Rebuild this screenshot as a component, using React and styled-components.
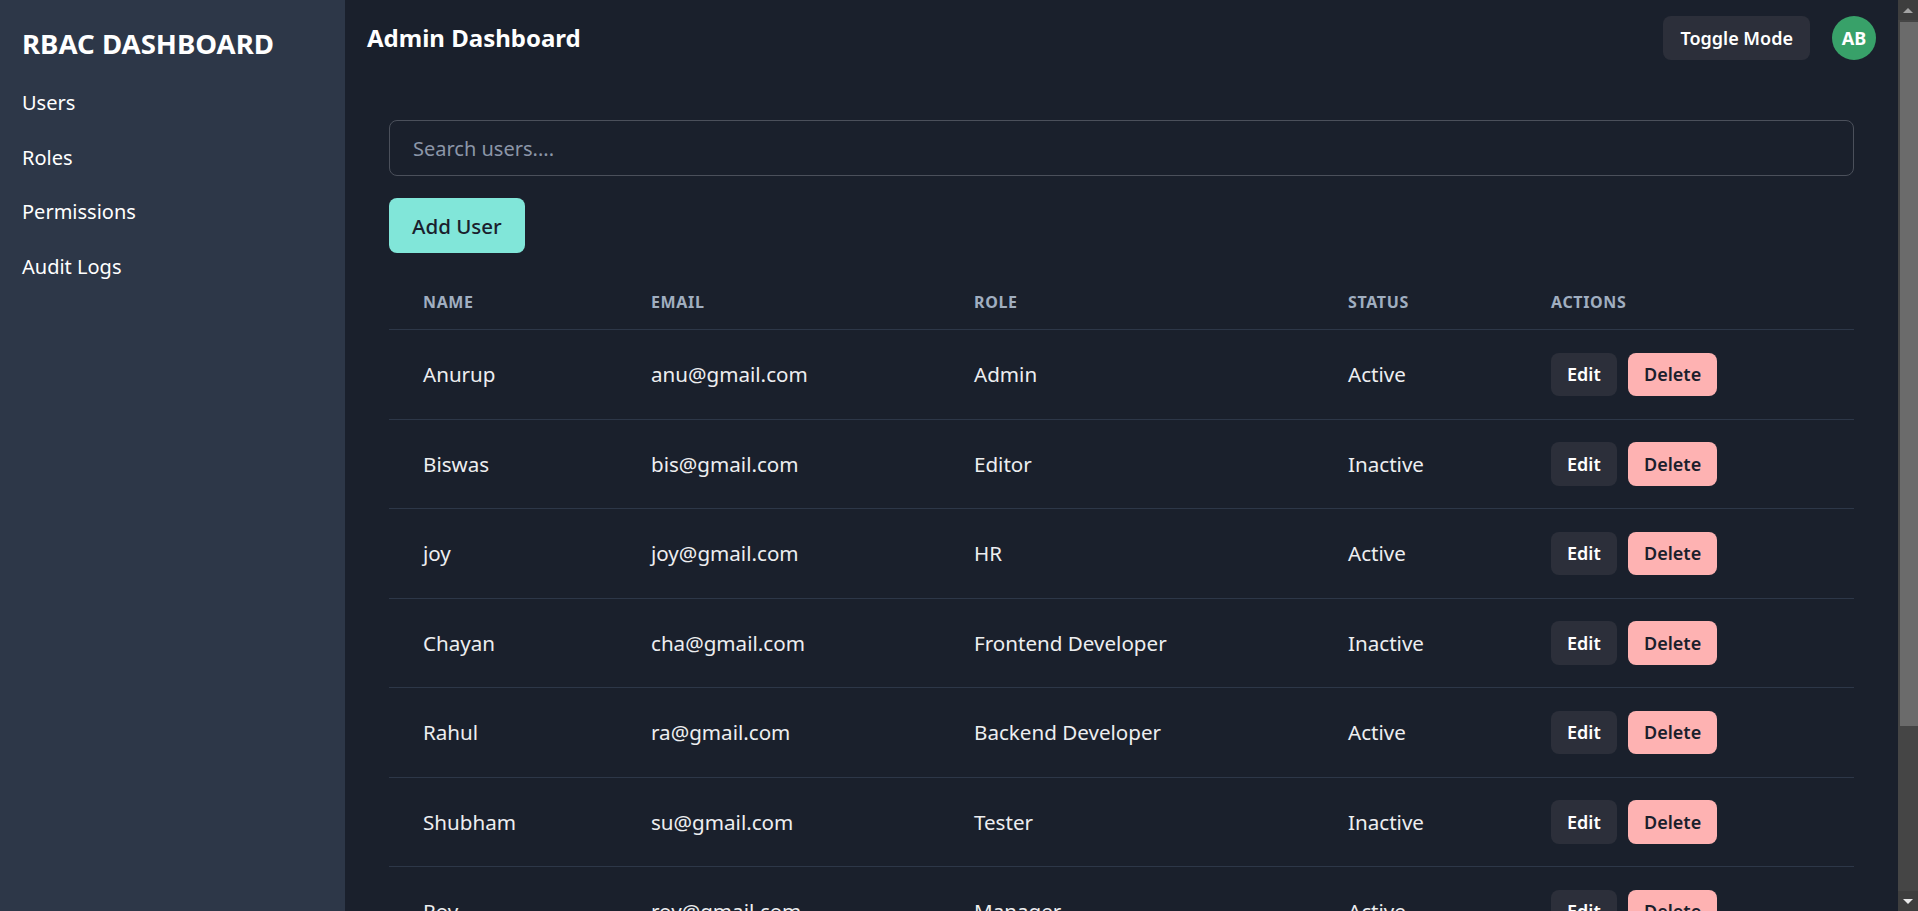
import React from 'react';
import styled, { createGlobalStyle } from 'styled-components';

const GlobalStyle = createGlobalStyle`
  html, body {
    margin: 0;
    padding: 0;
    background: #1a202c;
    font-family: "Noto Sans", "Open Sans", sans-serif;
    color: #edeef0;
  }
  * { box-sizing: border-box; }
`;

const users = [
  { name: 'Anurup', email: 'anu@gmail.com', role: 'Admin', status: 'Active' },
  { name: 'Biswas', email: 'bis@gmail.com', role: 'Editor', status: 'Inactive' },
  { name: 'joy', email: 'joy@gmail.com', role: 'HR', status: 'Active' },
  { name: 'Chayan', email: 'cha@gmail.com', role: 'Frontend Developer', status: 'Inactive' },
  { name: 'Rahul', email: 'ra@gmail.com', role: 'Backend Developer', status: 'Active' },
  { name: 'Shubham', email: 'su@gmail.com', role: 'Tester', status: 'Inactive' },
  { name: 'Roy', email: 'roy@gmail.com', role: 'Manager', status: 'Active' },
  { name: 'Amit', email: 'ami@gmail.com', role: 'Viewer', status: 'Active' },
];

const columns = [
  { label: 'Name', width: 228 },
  { label: 'Email', width: 323 },
  { label: 'Role', width: 374 },
  { label: 'Status', width: 203 },
  { label: 'Actions', width: 337 },
];

const App = () => {
  return (
    <>
      <GlobalStyle />
      <Layout>
        <Sidebar>
          <Brand>RBAC DASHBOARD</Brand>
          <NavList>
            <NavLink>Users</NavLink>
            <NavLink>Roles</NavLink>
            <NavLink>Permissions</NavLink>
            <NavLink>Audit Logs</NavLink>
          </NavList>
        </Sidebar>

        <Main>
          <TopBar>
            <PageTitle>Admin Dashboard</PageTitle>
            <TopActions>
              <GhostButton>Toggle Mode</GhostButton>
              <Avatar>AB</Avatar>
            </TopActions>
          </TopBar>

          <Content>
            <SearchInput placeholder="Search users...." />
            <AddButton>Add User</AddButton>

            <TableContainer>
              <colgroup>
                {columns.map((c) => (
                  <col key={c.label} style={{ width: c.width }} />
                ))}
              </colgroup>
              <thead>
                <tr>
                  {columns.map((c) => (
                    <TableHeader key={c.label}>{c.label}</TableHeader>
                  ))}
                </tr>
              </thead>
              <tbody>
                {users.map((item, idx) => (
                  <tr key={idx}>
                    <TableCell>{item.name}</TableCell>
                    <TableCell>{item.email}</TableCell>
                    <TableCell>{item.role}</TableCell>
                    <TableCell>{item.status}</TableCell>
                    <TableCell>
                      <ActionGroup>
                        <SmallButton>Edit</SmallButton>
                        <SmallButton danger>Delete</SmallButton>
                      </ActionGroup>
                    </TableCell>
                  </tr>
                ))}
              </tbody>
            </TableContainer>
          </Content>
        </Main>

        {/* window scrollbar as it shows in the screenshot */}
        <ScrollRail>
          <ScrollArrow />
          <ScrollTrack>
            <ScrollThumb />
          </ScrollTrack>
          <ScrollArrow down />
        </ScrollRail>
      </Layout>
    </>
  );
};

const Layout = styled.div`
  display: flex;
  min-height: 100vh;
`;

const Sidebar = styled.aside`
  width: 345px;
  flex-shrink: 0;
  background: #2d3748;
  padding: 27.4px 22px;
`;

const Brand = styled.h1`
  margin: 0;
  font-size: 27.6px;
  line-height: 1.2;
  font-weight: 700;
  color: #ffffff;
`;

const NavList = styled.nav`
  display: flex;
  flex-direction: column;
  gap: 24.6px;
  margin-top: 27.6px;
`;

const NavLink = styled.a`
  display: block;
  font-size: 20px;
  line-height: 30px;
  color: #ffffff;
  cursor: pointer;
`;

const Main = styled.main`
  flex: 1;
  min-width: 0;
  background: #1a202c;
`;

const TopBar = styled.header`
  height: 76px;
  padding: 0 22px;
  display: flex;
  align-items: center;
  justify-content: space-between;
`;

const PageTitle = styled.h2`
  margin: 0;
  font-size: 24px;
  line-height: 1.2;
  font-weight: 700;
  color: #ffffff;
`;

const TopActions = styled.div`
  display: flex;
  align-items: center;
  gap: 22px;
`;

const GhostButton = styled.button`
  height: 44px;
  padding: 0 17px;
  border: none;
  border-radius: 8px;
  background: #2c2f3a;
  color: #ffffff;
  font-family: inherit;
  font-size: 18px;
  font-weight: 600;
`;

const Avatar = styled.div`
  width: 44px;
  height: 44px;
  border-radius: 50%;
  background: #38a169;
  color: #ffffff;
  display: flex;
  align-items: center;
  justify-content: center;
  font-size: 18px;
  font-weight: 700;
`;

const Content = styled.section`
  padding: 44px;
`;

const SearchInput = styled.input`
  display: block;
  width: 100%;
  height: 56px;
  padding: 0 23px;
  border: 1px solid #4b505b;
  border-radius: 8px;
  background: transparent;
  color: #ffffff;
  font-family: inherit;
  font-size: 20px;
  outline: none;

  &::placeholder {
    color: #8c96a8;
  }
`;

const AddButton = styled.button`
  display: block;
  margin-top: 22px;
  height: 55px;
  padding: 0 23px;
  border: none;
  border-radius: 8px;
  background: #81e6d9;
  color: #1a202c;
  font-family: inherit;
  font-size: 20.5px;
  font-weight: 500;
`;

const TableContainer = styled.table`
  margin-top: 22px;
  width: 100%;
  table-layout: fixed;
  border-collapse: collapse;
`;

const TableHeader = styled.th`
  padding: 17px 34px;
  line-height: 20px;
  text-align: left;
  font-size: 16px;
  font-weight: 700;
  letter-spacing: 0.04em;
  text-transform: uppercase;
  color: #a0aec0;
  border-bottom: 1px solid #2d3748;
`;

const TableCell = styled.td`
  padding: 22.5px 34px;
  font-size: 20.6px;
  line-height: 30px;
  color: #edeef0;
  border-bottom: 1px solid #2d3748;
  white-space: nowrap;
`;

const ActionGroup = styled.div`
  display: flex;
  gap: 11.3px;
`;

const SmallButton = styled.button`
  height: 43.5px;
  padding: 0 16px;
  border: none;
  border-radius: 8px;
  background: ${(p) => (p.danger ? '#feb2b2' : '#2c2f3a')};
  color: ${(p) => (p.danger ? '#1a202c' : '#ffffff')};
  font-family: inherit;
  font-size: 18px;
  font-weight: 600;
`;

const ScrollRail = styled.div`
  position: sticky;
  top: 0;
  align-self: flex-start;
  width: 20px;
  height: 100vh;
  flex-shrink: 0;
  display: flex;
  flex-direction: column;
  background: #454545;
`;

const ScrollArrow = styled.div`
  height: 20px;
  flex-shrink: 0;
  background: #3e3e3e;
  display: flex;
  align-items: center;
  justify-content: center;

  &::before {
    content: '';
    border-left: 5px solid transparent;
    border-right: 5px solid transparent;
    ${(p) =>
      p.down
        ? 'border-top: 5px solid #e8e8e8;'
        : 'border-bottom: 5px solid #a3a3a3;'}
  }
`;

const ScrollTrack = styled.div`
  flex: 1;
  padding: 2px 0 0 2px;
`;

const ScrollThumb = styled.div`
  height: 704px;
  background: #6b6b6b;
`;

export default App;
